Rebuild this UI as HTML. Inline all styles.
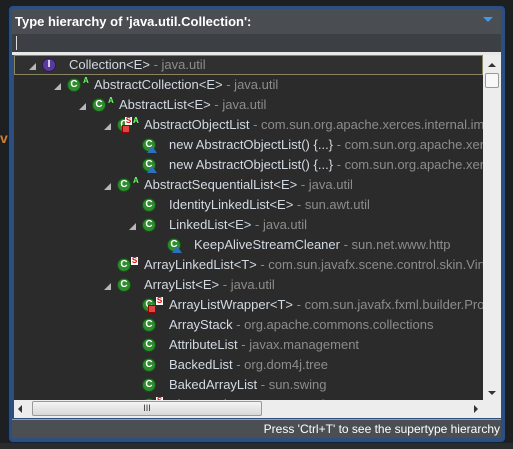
<!DOCTYPE html>
<html><head><style>
*{margin:0;padding:0;box-sizing:border-box}
body{width:513px;height:449px;background:#1e1f20;position:relative;overflow:hidden;font-family:"Liberation Sans",sans-serif}
.abs{position:absolute}
.frame{left:8px;top:5px;width:498px;height:438px;background:#2c4f7f;border:1px solid #10213a;border-radius:5px}
.title{left:12px;top:9px;width:489px;height:25px;background:#4a4e52;color:#fff;font-weight:bold;font-size:13px;line-height:25px;padding-left:3px}
.filter{left:12px;top:34px;width:489px;height:18px;background:#3c4044}
.sep{left:12px;top:52px;width:489px;height:3px;background:#e8e8e8}
.tree{left:14px;top:55px;width:469px;height:345px;background:#2b2b2b;overflow:hidden}
.vs{left:483px;top:55px;width:18px;height:345px;background:#ededed}
.hs{left:14px;top:400px;width:487px;height:18px;background:#ededed}
.status{left:12px;top:419px;width:489px;height:19px;background:#4b4f53;border-top:1px solid #9aa0a6;color:#fff;font-size:12px;line-height:18px;text-align:right;padding-right:1px}
.row{position:absolute;height:20px;line-height:20px;font-size:13px;color:#d3dae2;white-space:nowrap}
.row .p{color:#8c8c8c}
.tg{position:absolute;width:0;height:0;border-left:7px solid transparent;border-bottom:7px solid #b8b8b8}
.ic{position:absolute;width:14px;height:14px;border-radius:50%;background:#2e8b2e;border:1px solid #145214;color:#fff;font-size:10px;font-weight:bold;line-height:12px;text-align:center}
.ii{background:#5a3a9a;border-color:#2a1a5a}
.tri{position:absolute;width:0;height:0;border-left:5px solid transparent;border-right:5px solid transparent;border-bottom:7px solid #2f6fc0}
.a{position:absolute;font-size:8px;color:#6f6;font-weight:bold;line-height:8px}
.s{position:absolute;width:7px;height:8px;background:#fff;color:#d00;font-size:8px;line-height:8px;font-weight:bold;text-align:center}
.sq{position:absolute;width:8px;height:8px;background:#e04545;border:1px solid #900}
</style></head><body>
<div class="abs" style="left:0;top:130px;color:#d08030;font-weight:bold;font-size:14px">vp</div>
<div class="abs frame"></div>
<div class="abs title">Type hierarchy of 'java.util.Collection':</div>
<div class="abs" style="left:483px;top:17px;width:0;height:0;border-left:5px solid transparent;border-right:5px solid transparent;border-top:5px solid #3a9af0"></div>
<div class="abs filter"></div>
<div class="abs" style="left:16px;top:36px;width:1px;height:14px;background:#ddd"></div>
<div class="abs sep"></div>
<div class="abs tree">
<div class="abs" style="left:0;top:0;width:469px;height:20px;border:1px solid #8a8560;background:#303030"></div>
</div>
<div id="rows" class="abs" style="left:0;top:0;width:483px;height:400px;overflow:hidden"></div>
<div class="abs vs">
<div class="abs" style="left:5px;top:8px;border-left:4px solid transparent;border-right:4px solid transparent;border-bottom:4px solid #333"></div>
<div class="abs" style="left:2px;top:18px;width:14px;height:15px;background:#f8f8f8;border:1px solid #999;border-radius:2px"></div>
<div class="abs" style="left:5px;top:336px;border-left:4px solid transparent;border-right:4px solid transparent;border-top:4px solid #333"></div>
</div>
<div class="abs hs">
<div class="abs" style="left:4px;top:5px;border-top:4px solid transparent;border-bottom:4px solid transparent;border-right:4px solid #333"></div>
<div class="abs" style="left:18px;top:1px;width:230px;height:15px;background:linear-gradient(#f4f4f4,#d8d8d8);border:1px solid #999;border-radius:2px;font-size:9px;text-align:center;line-height:13px;color:#333">III</div>
<div class="abs" style="left:460px;top:5px;border-top:4px solid transparent;border-bottom:4px solid transparent;border-left:4px solid #333"></div>
</div>
<div class="abs status">Press 'Ctrl+T' to see the supertype hierarchy</div>
<div class="abs" style="left:0;top:443px;width:513px;height:6px;background:#2a2b2c"></div>
<script>
var R=[[0,1,'Collection&lt;E&gt;','java.util','I'],
[1,1,'AbstractCollection&lt;E&gt;','java.util','A'],
[2,1,'AbstractList&lt;E&gt;','java.util','A'],
[3,1,'AbstractObjectList','com.sun.org.apache.xerces.internal.im','SA'],
[4,0,'new AbstractObjectList() {...}','com.sun.org.apache.xerces','T'],
[4,0,'new AbstractObjectList() {...}','com.sun.org.apache.xerces','T'],
[3,1,'AbstractSequentialList&lt;E&gt;','java.util','A'],
[4,0,'IdentityLinkedList&lt;E&gt;','sun.awt.util',''],
[4,1,'LinkedList&lt;E&gt;','java.util',''],
[5,0,'KeepAliveStreamCleaner','sun.net.www.http','T'],
[3,0,'ArrayLinkedList&lt;T&gt;','com.sun.javafx.scene.control.skin.Virt','S'],
[3,1,'ArrayList&lt;E&gt;','java.util',''],
[4,0,'ArrayListWrapper&lt;T&gt;','com.sun.javafx.fxml.builder.Pro','SQ'],
[4,0,'ArrayStack','org.apache.commons.collections',''],
[4,0,'AttributeList','javax.management',''],
[4,0,'BackedList','org.dom4j.tree',''],
[4,0,'BakedArrayList','sun.swing',''],
[4,0,'AbstractListWrapper','org.foo','S']];
var h='';
R.forEach(function(r,i){var y=55+i*20,L=r[0],ix=42+L*25,tx=69+L*25;
if(r[1])h+='<div class="tg" style="left:'+(ix-13)+'px;top:'+(y+8)+'px"></div>';
if(r[4]=='I')h+='<div class="ic ii" style="left:'+ix+'px;top:'+(y+3)+'px">I</div>';
else h+='<div class="ic" style="left:'+ix+'px;top:'+(y+3)+'px">C</div>';
if(r[4].indexOf('A')>=0)h+='<div class="a" style="left:'+(ix+16)+'px;top:'+(y+2)+'px">A</div>';
if(r[4].indexOf('S')>=0)h+='<div class="s" style="left:'+(ix+(r[4]=='SA'?8:14))+'px;top:'+(y+2)+'px">S</div>';
if(r[4]=='SA')h+='<div class="a" style="left:'+(ix+16)+'px;top:'+(y+2)+'px">A</div><div class="sq" style="left:'+(ix+5)+'px;top:'+(y+10)+'px"></div>';
if(r[4]=='SQ')h+='<div class="sq" style="left:'+(ix+6)+'px;top:'+(y+10)+'px"></div>';
if(r[4]=='T')h+='<div class="tri" style="left:'+(ix+5)+'px;top:'+(y+11)+'px"></div>';
h+='<div class="row" style="left:'+tx+'px;top:'+y+'px">'+r[2]+' <span class="p">- '+r[3]+'</span></div>';});
document.getElementById('rows').innerHTML=h;
</script>
</body></html>
